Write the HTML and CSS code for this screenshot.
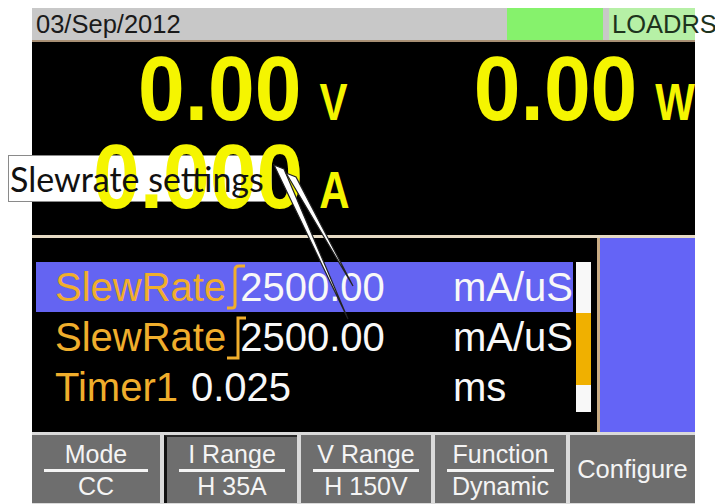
FILE: index.html
```html
<!DOCTYPE html>
<html>
<head lang="en">
<meta charset="UTF-8">
<title>Load settings</title>
<link rel="stylesheet" href="styles.css">
</head>
<body>
<div class="screen">
    <div class="status">
        <span class="date">03/Sep/2012</span>
        <span class="ind ind-run"></span>
        <span class="ind ind-load">LOADRS</span>
    </div>
    <div class="meter">
        <div class="mrow mrow-top">
            <div class="reading"><span class="num">0.00</span><span class="unit">V</span></div>
            <div class="reading"><span class="num">0.00</span><span class="unit">W</span></div>
        </div>
        <div class="mrow mrow-cur">
            <div class="reading"><span class="num">0.000</span><span class="unit">A</span></div>
        </div>
    </div>
    <div class="panel">
        <div class="list">
            <div class="rows">
                <div class="row sel">
                    <span class="name">SlewRate</span>
                    <svg class="edge" width="22" height="50" viewBox="0 0 22 50"><path d="M0 46 H5 Q8 46 8 43 V8 Q8 4 12 4 H18" /></svg>
                    <span class="val">2500.00</span>
                    <span class="unit-s">mA/uS</span>
                </div>
                <div class="row">
                    <span class="name">SlewRate</span>
                    <svg class="edge" width="22" height="50" viewBox="0 0 22 50"><path d="M19 6 H11 V46 H0" /></svg>
                    <span class="val">2500.00</span>
                    <span class="unit-s">mA/uS</span>
                </div>
                <div class="row">
                    <span class="name">Timer1</span>
                    <span class="val val-t">0.025</span>
                    <span class="unit-s">ms</span>
                </div>
            </div>
            <div class="scroll">
                <i class="s-top"></i>
                <i class="s-thumb"></i>
                <i class="s-bot"></i>
            </div>
        </div>
        <div class="side"></div>
    </div>
    <div class="keys">
        <div class="key"><span class="k-lab">Mode</span><span class="k-val">CC</span></div>
        <div class="key on"><span class="k-lab">I Range</span><span class="k-val">H 35A</span></div>
        <div class="key"><span class="k-lab">V Range</span><span class="k-val">H 150V</span></div>
        <div class="key"><span class="k-lab">Function</span><span class="k-val">Dynamic</span></div>
        <div class="key key-one">Configure</div>
    </div>
</div>

<div class="callout"><span class="callout-txt">Slewrate settings</span></div>
<svg class="pointer" width="715" height="504" viewBox="0 0 715 504">
    <polygon points="274,165 284,169 348,319" />
    <polygon points="286,173 296,177 353,286" />
</svg>
</body>
</html>
```

FILE: styles.css
```css
*{margin:0;padding:0;box-sizing:border-box;}
body{background:#fff;font-family:"Liberation Sans",Arial,sans-serif;width:715px;height:504px;overflow:hidden;position:relative;}

.screen{width:663px;margin:8px 0 0 32px;}

/* status bar */
.status{display:flex;height:34px;background:#c8c8c8;border-bottom:2px solid #a88f74;}
.date{font-size:25.5px;line-height:32px;padding-left:4px;color:#1a1a1a;}
.ind{height:32px;}
.ind-run{margin-left:auto;width:96px;background:#86f26c;}
.ind-load{margin-left:6px;width:86px;background:#b6f0a6;font-size:25.5px;line-height:32px;padding-left:3px;color:#1d331d;white-space:nowrap;}

/* big readings */
.meter{background:#000;height:196px;border-bottom:3px solid #e6dac4;}
.mrow{display:flex;position:relative;z-index:1;color:#f5f500;font-weight:bold;}
.mrow-top{justify-content:space-between;padding:7px 0 0 106px;}
.mrow-cur{padding-left:61px;margin-top:4px;}
.reading{display:flex;align-items:baseline;}
.num{font-size:84px;line-height:84px;display:inline-block;transform:scaleY(1.09);transform-origin:50% 85%;}
.unit{font-size:42px;line-height:42px;margin-left:18px;display:inline-block;transform:scaleY(1.25);transform-origin:50% 80%;}
.mrow-cur .unit{margin-left:16px;}

/* settings list */
.panel{display:flex;height:194px;}
.list{flex:1;background:#000;display:flex;padding:24px 0 0 4px;}
.rows{width:537px;}
.row{display:flex;align-items:center;height:50px;font-size:40px;line-height:50px;color:#f8f8f8;position:relative;}
.row.sel{background:#6464f2;}
.name{color:#f0ae2c;padding-left:19px;}
.edge{margin-left:1px;flex:none;overflow:visible;}
.edge path{fill:none;stroke:#f0ae2c;stroke-width:3;}
.val{margin-left:-9px;}
.val-t{margin-left:13px;}
.unit-s{margin-left:auto;width:120px;}
.scroll{width:15px;height:150px;margin-left:3px;display:flex;flex-direction:column;}
.scroll i{display:block;}
.s-top{height:51px;background:#f8f8f8;}
.s-thumb{height:72px;background:#f0b000;}
.s-bot{flex:1;background:#f8f8f8;}
.side{width:98px;background:#6464f6;border-left:3px solid #c8ab84;}

/* softkeys */
.keys{display:grid;grid-template-columns:128px 133px 130px 131px 1fr;gap:4px;background:#dadada;padding:3px 0 1px;}
.key{height:68px;background:#6e6e6e;color:#f4f4f4;font-size:25px;display:flex;flex-direction:column;align-items:center;padding:6px 12px 0;}
.key.on{border-left:3px solid #111;border-top:2px solid #2a2a2a;padding-top:4px;}
.k-lab{line-height:26px;width:100%;text-align:center;border-bottom:3px solid #f4f4f4;padding-bottom:2px;}
.k-val{line-height:26px;margin-top:1px;}
.key-one{justify-content:center;padding:0;font-size:25.5px;}

/* overlay callout */
.callout{position:absolute;left:8px;top:155px;width:264px;height:47px;background:#fff;border:1px solid #8a8a8a;}
.callout-txt{position:relative;z-index:2;display:block;font-family:Lato,"Open Sans",sans-serif;font-size:34px;line-height:45px;padding-left:1px;color:#111;white-space:nowrap;}
.pointer{position:absolute;left:0;top:0;z-index:3;}
.pointer polygon{fill:#fff;stroke:#222;stroke-width:1.2;}
```
